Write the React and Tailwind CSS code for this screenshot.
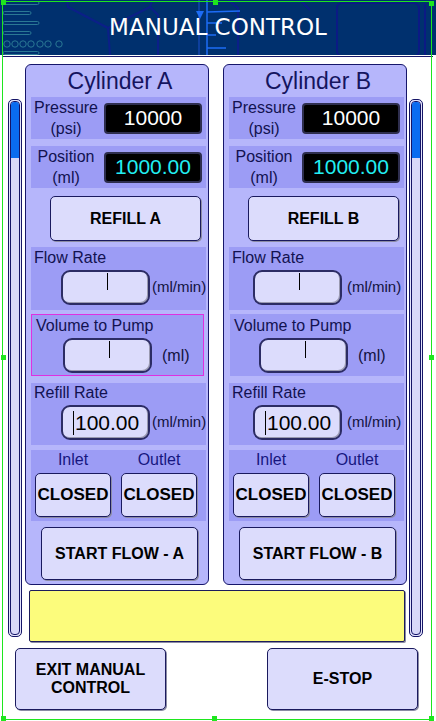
import React from 'react';

function HeaderArt() {
  return (
    <svg className="absolute inset-0" width="436" height="55" viewBox="0 0 436 55" fill="none">
      {/* circuit traces, left */}
      {[
        [3, 36],
        [13, 28],
        [23, 36],
        [33, 28],
        [53, 36],
      ].map(([y, w]) => (
        <rect key={y} x="3" y={y - 1.5} width={w} height="3" rx="1.5" stroke="#2a7894" strokeWidth="1" />
      ))}
      {[7, 15, 23, 31, 40, 48, 59].map((cx) => (
        <circle key={cx} cx={cx} cy="44" r="3.2" stroke="#2a7894" strokeWidth="1" />
      ))}
      {/* hex lines */}
      <g stroke="#0b1f88" strokeWidth="2">
        <polyline points="67,0 68,7 108,28 110,55" />
        <polyline points="108,28 150,7 152,0" />
        <polyline points="150,7 158,15 158,55" />
        <polyline points="228,0 238,8 238,55" />
        <polyline points="300,0 310,10" />
      </g>
      {/* bright bus */}
      <g stroke="#1d6cf6" strokeWidth="1.5">
        <line x1="199" y1="0" x2="199" y2="55" stroke="#1a4fcc" strokeWidth="1" />
        <line x1="207" y1="0" x2="207" y2="55" />
        <line x1="207" y1="12" x2="240" y2="11" />
        <line x1="207" y1="23" x2="222" y2="23" />
        <line x1="207" y1="35" x2="216" y2="35" />
        <line x1="207" y1="48" x2="226" y2="48" />
      </g>
      <polygon points="196,11 204,11 200,19" fill="#1d6cf6" />
      {/* right block */}
      <rect x="337" y="3" width="82" height="53" rx="5" stroke="#0b1a84" strokeWidth="2" />
      <line x1="425" y1="4" x2="425" y2="55" stroke="#0b1a84" strokeWidth="2" />
    </svg>
  );
}

function Scrollbar() {
  return (
    <div className="mt-[42px] h-[538px] w-[14px] rounded-[5px] border border-[#141466] bg-[#e4e4fc] p-[1px]">
      <div className="h-full w-full overflow-hidden rounded-[4px] border border-[#141466] bg-[#d8d8f8]">
        <div className="h-[56px] bg-[#0a6cf0]" />
      </div>
    </div>
  );
}

function Btn({ className, children }) {
  return (
    <div
      className={`flex items-center justify-center rounded-[5px] border border-[#1a1a5e] bg-[#dcdcfc] text-center font-bold text-black shadow-[1px_1px_0_#8c8ca4] ${className}`}
    >
      {children}
    </div>
  );
}

function Readout({ top, bottom, value, valueColor, className }) {
  return (
    <div className={`ml-[5px] mr-[2px] flex h-[42px] items-center bg-[#9c9cf5] ${className}`}>
      <div className="w-[70px] text-center text-[16px] leading-[21px] text-[#121250]">
        {top}
        <br />
        {bottom}
      </div>
      <div
        className={`ml-auto mr-[4px] flex h-[31px] w-[98px] items-center justify-center rounded-[4px] border-2 border-[#2e2e4e] bg-black text-[21px] ${valueColor}`}
      >
        {value}
      </div>
    </div>
  );
}

function Field({ value }) {
  return (
    <div className="relative flex h-[35px] w-[89px] shrink-0 items-center rounded-[9px] border-2 border-[#2c2c64] bg-[#dcdcfc] shadow-[inset_-1px_-1px_0_#9a9ab0]">
      {value ? (
        <span className="ml-[10px] flex items-center text-[21px] leading-none text-black">
          <span className="mr-[1px] h-[24px] w-[1px] bg-black" />
          {value}
        </span>
      ) : (
        <span className="absolute left-[44px] top-[1px] h-[17px] w-[1px] bg-black" />
      )}
    </div>
  );
}

function InputSection({ label, unit, value, className, fieldMargin, gap, labelTop }) {
  return (
    <div className={`bg-[#9c9cf5] ${className}`}>
      <div className={`pl-[3px] text-[16px] leading-[20px] text-[#121250] ${labelTop}`}>{label}</div>
      <div className={`mt-[2px] flex items-center ${fieldMargin}`}>
        <Field value={value} />
        <span className={`text-[15px] text-[#121240] ${gap}`}>{unit}</span>
      </div>
    </div>
  );
}

function Panel({ id, selected }) {
  const fieldMargin = selected ? 'ml-[30px]' : 'ml-[24px]';
  return (
    <div className="flex h-[521px] w-[184px] flex-col rounded-[6px] border border-[#16166a] bg-[#b6b6fb]">
      <div className="h-[32px] pl-[6px] text-center text-[23px] leading-[32px] text-[#15155f]">Cylinder {id}</div>
      <Readout top="Pressure" bottom="(psi)" value="10000" valueColor="text-white" />
      <Readout top="Position" bottom="(ml)" value="1000.00" valueColor="text-[#22eef2]" className="mt-[7px]" />
      <Btn className="ml-[24px] mt-[8px] h-[45px] w-[151px] text-[16px]">REFILL {id}</Btn>
      <InputSection
        label="Flow Rate"
        unit="(ml/min)"
        className="ml-[5px] mr-[2px] mt-[6px] h-[63px] pt-[1px]"
        fieldMargin={fieldMargin}
        gap={selected ? 'ml-[2px]' : 'ml-[5px]'}
      />
      <InputSection
        label="Volume to Pump"
        unit="(ml)"
        className={
          selected
            ? 'ml-[5px] mr-[4px] mt-[4px] h-[62px] border border-[#e030e0] pt-[1px]'
            : 'ml-[6px] mr-[2px] mt-[4px] h-[62px] pt-[2px]'
        }
        fieldMargin={selected ? 'ml-[31px]' : 'ml-[29px]'}
        gap="ml-[10px] text-[16px]"
        labelTop="pl-[4px]"
      />
      <InputSection
        label="Refill Rate"
        unit="(ml/min)"
        value="100.00"
        className="ml-[5px] mr-[2px] mt-[7px] h-[62px]"
        fieldMargin={fieldMargin}
        gap={selected ? 'ml-[2px]' : 'ml-[5px]'}
      />
      <div className="ml-[5px] mr-[2px] mt-[5px] h-[71px] bg-[#9c9cf5]">
        <div className="flex pl-[4px] text-[16px] leading-[20px] text-[#161680]">
          <div className="w-[76px] text-center">Inlet</div>
          <div className="ml-[10px] w-[76px] text-center">Outlet</div>
        </div>
        <div className="mt-[3px] flex gap-[10px] pl-[4px]">
          <Btn className="h-[44px] w-[76px] text-[17px]">CLOSED</Btn>
          <Btn className="h-[44px] w-[76px] text-[17px]">CLOSED</Btn>
        </div>
      </div>
      <Btn className="ml-[15px] mt-[6px] h-[53px] w-[157px] text-[16px]">START FLOW - {id}</Btn>
    </div>
  );
}

function Handle({ className }) {
  return <div className={`absolute h-[5px] w-[5px] bg-[#1ee61e] ${className}`} />;
}

export default function App() {
  return (
    <div className="relative h-[721px] w-[436px] overflow-hidden bg-white font-['Liberation_Sans',Arial,sans-serif]">
      <header className="relative h-[55px] bg-[#00306e]">
        <HeaderArt />
        <h1 className="relative flex h-full items-center justify-center font-['DejaVu_Sans',sans-serif] text-[23px] text-white">
          MANUAL CONTROL
        </h1>
      </header>
      <div className="mx-[3px] mt-[1px] h-[1px] bg-[#16166a]" />

      <div className="flex pl-[8px]">
        <Scrollbar />
        <div className="ml-[3px] flex flex-col">
          <div className="mt-[7px] flex gap-[14px]">
            <Panel id="A" selected />
            <Panel id="B" />
          </div>
          <div className="ml-[4px] mt-[5px] h-[52px] w-[376px] rounded-[2px] border border-[#1c1c5c] bg-[#fcfc7c] shadow-[1px_1px_0_#8c8ca4]" />
        </div>
        <div className="ml-[2px]">
          <Scrollbar />
        </div>
      </div>

      <div className="mt-[6px] flex">
        <Btn className="ml-[15px] h-[62px] w-[151px] text-[16px] leading-[18px]">
          EXIT MANUAL
          <br />
          CONTROL
        </Btn>
        <Btn className="ml-auto mr-[18px] h-[62px] w-[151px] text-[16px]">E-STOP</Btn>
      </div>

      {/* editor selection outline */}
      <div className="pointer-events-none absolute left-[2px] top-[1px] h-[719px] w-[430px] border border-[#1ee61e]" />
      <Handle className="left-[213px] top-0" />
      <Handle className="left-[429px] top-[1px]" />
      <Handle className="left-[1px] top-0" />
      <Handle className="left-[1px] top-[355px]" />
      <Handle className="left-[429px] top-[355px]" />
      <Handle className="left-[212px] top-[716px]" />
      <Handle className="left-[1px] top-[716px]" />
      <Handle className="left-[429px] top-[716px]" />
    </div>
  );
}
